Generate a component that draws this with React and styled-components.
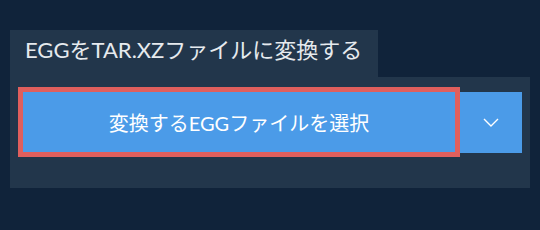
import styled, {createGlobalStyle} from "styled-components";

const colors = {
    page: '#10233a',
    panel: '#22364b',
    blue: '#4b9be8',
    red: '#e05f5d',
    text: '#e6eaee',
    white: '#ffffff',
}

const GlobalStyle = createGlobalStyle`
  html, body {
    margin: 0;
    padding: 0;
    background: ${colors.page};
  }
  body {
    font-family: Lato, "Noto Sans CJK JP", sans-serif;
  }
`

const Wrapper = styled.div`
  padding: 30px 10px 0 10px;
  width: 520px;
`
const Tab = styled.div`
  display: inline-block;
  box-sizing: border-box;
  background-color: ${colors.panel};
  color: ${colors.text};
  font-size: 22px;
  line-height: 40px;
  height: 47px;
  width: 368px;
  padding: 0 0 0 15px;
  white-space: nowrap;
`
const Panel = styled.div`
  display: flex;
  background-color: ${colors.panel};
  padding: 15px 8px 35px 13px;
`
const SelectBtn = styled.button`
  flex: 1;
  height: 60px;
  border: none;
  outline: 5px solid ${colors.red};
  background-color: ${colors.blue};
  color: ${colors.white};
  font-family: inherit;
  font-size: 20px;
  padding: 0;
  cursor: pointer;
`
const DropBtn = styled.button`
  width: 62px;
  height: 61px;
  margin-left: 5px;
  border: none;
  background-color: ${colors.blue};
  display: flex;
  align-items: center;
  justify-content: center;
  padding: 0;
  cursor: pointer;
`

const Chevron = () => (
    <svg width="16" height="9" viewBox="0 0 16 9">
        <path d="M1 1 L8 8 L15 1" fill="none" stroke={colors.white} strokeWidth="1.4"/>
    </svg>
)

const App = () => {
    return (
        <Wrapper>
            <GlobalStyle/>
            <Tab>EGGをTAR.XZファイルに変換する</Tab>
            <Panel>
                <SelectBtn>変換するEGGファイルを選択</SelectBtn>
                <DropBtn><Chevron/></DropBtn>
            </Panel>
        </Wrapper>
    )
}

export default App
